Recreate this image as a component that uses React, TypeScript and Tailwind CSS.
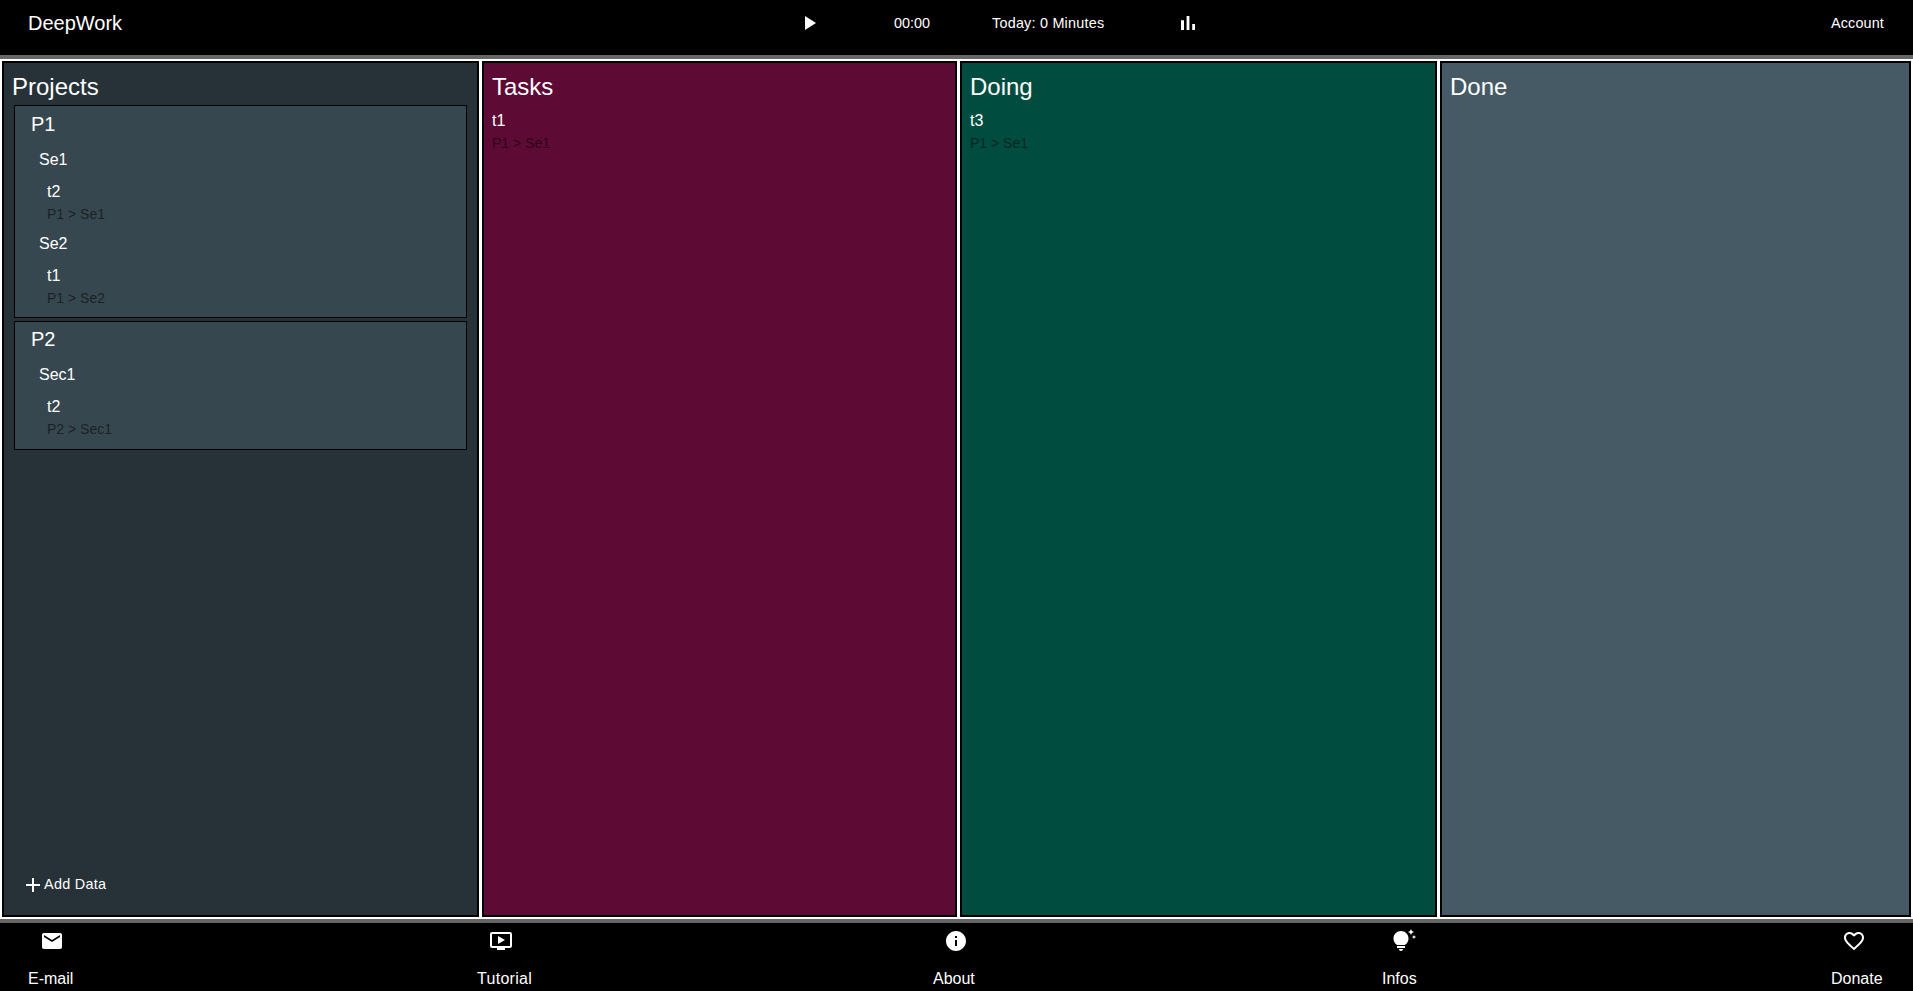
import { MdAdd, MdEmail, MdFavoriteBorder, MdInfo, MdOndemandVideo, MdPlayArrow, MdTipsAndUpdates } from "react-icons/md"

const Task = ({ name, crumb }: { name: string; crumb: string }) => (
  <div>
    <div className="h-[27px] text-base leading-[28px] text-white">{name}</div>
    <div className="h-[21px] text-sm leading-[18px] text-black/55">{crumb}</div>
  </div>
)

const projects = [
  {
    name: "P1",
    cls: "pb-[7px]",
    sections: [
      { name: "Se1", task: "t2", crumb: "P1 > Se1" },
      { name: "Se2", task: "t1", crumb: "P1 > Se2" },
    ],
  },
  {
    name: "P2",
    cls: "-mt-[1px] pb-[8px]",
    sections: [{ name: "Sec1", task: "t2", crumb: "P2 > Sec1" }],
  },
]

const footerLinks = [
  { label: "E-mail", icon: <MdEmail size={24} />, cell: "w-[449px]", cls: "ml-[2px]", text: "" },
  { label: "Tutorial", icon: <MdOndemandVideo size={24} />, cell: "w-[456px]", cls: "-ml-[7px]", text: "tracking-[0.3px]" },
  { label: "About", icon: <MdInfo size={24} />, cell: "w-[449px]", cls: "ml-[4px]", text: "" },
  { label: "Infos", icon: <MdTipsAndUpdates size={24} />, cell: "w-[449px]", cls: "ml-[10px]", text: "" },
  { label: "Donate", icon: <MdFavoriteBorder size={24} />, cell: "flex-1", cls: "-ml-[5px]", text: "" },
]

const BarChart = () => (
  <svg viewBox="0 0 24 24" width={24} height={24} fill="currentColor" className="ml-[72px] mt-[11px]">
    <path d="M5 9.2h3V19H5V9.2zM10.6 5h2.8v14h-2.8V5zm5.6 8H19v6h-2.8v-6z" />
  </svg>
)

const Column = ({ title, className, children }: { title: string; className: string; children?: React.ReactNode }) => (
  <div className={"flex flex-col border-2 border-black px-2 " + className}>
    <div className="h-[42px] pt-1 text-2xl leading-[40px] text-white">{title}</div>
    {children}
  </div>
)

export default function App() {
  return (
    <div className="flex h-[991px] flex-col overflow-hidden bg-black font-['Liberation_Sans',Arial,sans-serif] text-white">
      <header className="flex h-[55px] items-start pl-[28px] pr-[29px]">
        <div className="mt-[11px] w-[95px] text-xl leading-[24px]">DeepWork</div>
        <MdPlayArrow size={24} className="ml-[674px] mt-[11px]" />
        <div className="ml-[73px] mt-[14px] text-[14.4px] leading-[18px]">00:00</div>
        <div className="ml-[62px] mt-[14px] text-[14.4px] leading-[18px] tracking-[0.22px]">Today: 0 Minutes</div>
        <BarChart />
        <div className="ml-auto mt-[14px] text-[14.4px] leading-[18px] tracking-[0.15px]">Account</div>
      </header>

      <div className="h-1 bg-[#666666]" />

      <main className="flex min-h-0 flex-1 gap-[3px] bg-white px-[2px] py-[2px]">
        <Column title="Projects" className="w-[477px] bg-[#263238]">
          <div className="flex flex-col gap-[3px] px-[2px]">
            {projects.map((p) => (
              <div key={p.name} className="border border-black bg-[#37474f] pl-[16px]">
                <div className={p.cls}>
                  <div className="h-9 text-xl leading-9 text-white">{p.name}</div>
                  {p.sections.map((s) => (
                    <div key={s.name} className="pl-2">
                      <div className="h-9 text-base leading-9 text-white">{s.name}</div>
                      <div className="pl-2">
                        <Task name={s.task} crumb={s.crumb} />
                      </div>
                    </div>
                  ))}
                </div>
              </div>
            ))}
          </div>
          <div className="mt-auto mb-[18px] flex items-center pl-[9px] text-[14.4px] tracking-[0.3px] text-white">
            <MdAdd size={24} className="-mr-[1px] mt-[1px]" />
            Add Data
          </div>
        </Column>
        <Column title="Tasks" className="w-[475px] bg-[#5d0a35]">
          <div className="mt-[2px]">
            <Task name="t1" crumb="P1 > Se1" />
          </div>
        </Column>
        <Column title="Doing" className="w-[477px] bg-[#004d40]">
          <div className="mt-[2px]">
            <Task name="t3" crumb="P1 > Se1" />
          </div>
        </Column>
        <Column title="Done" className="flex-1 bg-[#455a64]" />
      </main>

      <div className="h-1 bg-[#666666]" />

      <footer className="flex h-[68px] pl-[28px]">
        {footerLinks.map((l) => (
          <div key={l.label} className={l.cell}>
            <div className="inline-flex flex-col items-center">
              <div className={"mt-[6px] h-[24px] " + l.cls}>{l.icon}</div>
              <div className={"mt-[16px] text-base leading-[20px] " + l.text}>{l.label}</div>
            </div>
          </div>
        ))}
      </footer>
    </div>
  )
}
